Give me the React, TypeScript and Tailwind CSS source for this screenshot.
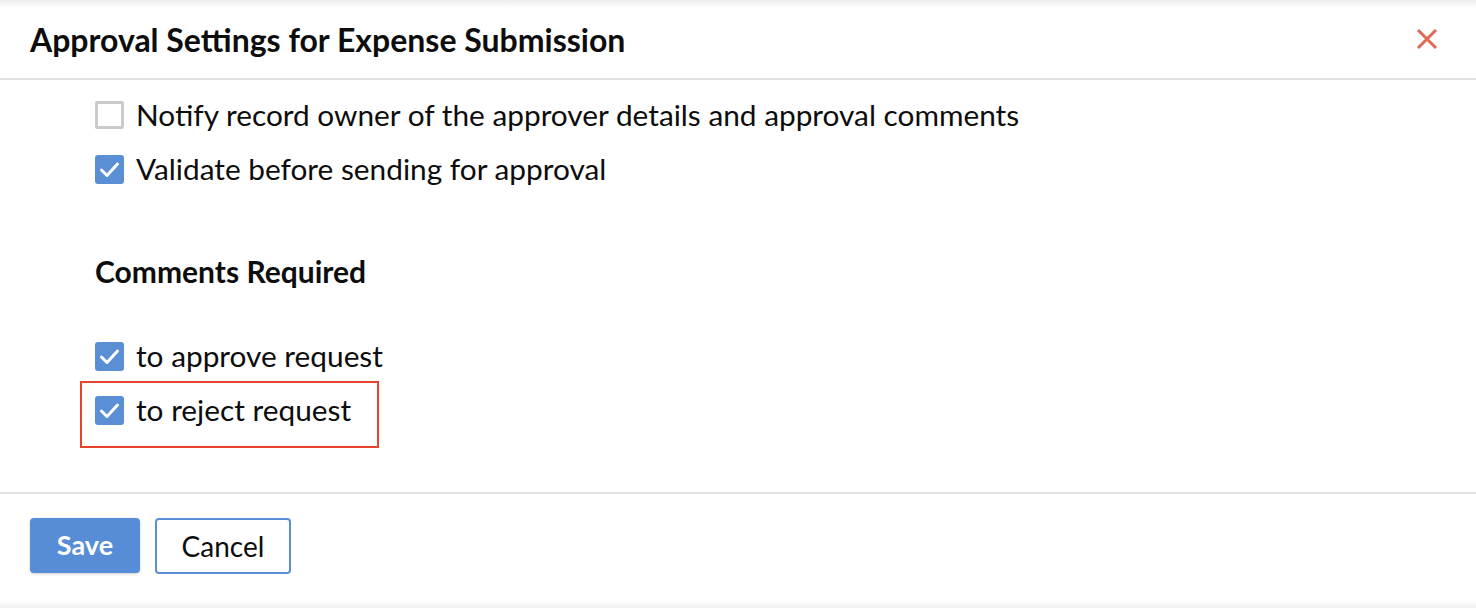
import React from "react";

function Box({ checked }: { checked: boolean }) {
  if (!checked) {
    return (
      <span className="w-[29px] h-[28px] shrink-0 border-[3px] border-[#cbcbcb] bg-white rounded-[2px]" />
    );
  }
  return (
    <span className="w-[29px] h-[29px] shrink-0 rounded-[3px] bg-[#5b8fd5] flex items-center justify-center">
      <svg width="21" height="17" viewBox="0 0 21 17" fill="none">
        <path d="M2.5 9l5.5 5.5L18.5 3" stroke="white" strokeWidth="3" strokeLinecap="round" strokeLinejoin="round" />
      </svg>
    </span>
  );
}

function Row({ checked, label }: { checked: boolean; label: string }) {
  return (
    <div className="flex items-center h-[54px] gap-[12px]">
      <Box checked={checked} />
      <span className="text-[29.8px] leading-none text-[#0d0d0d]">{label}</span>
    </div>
  );
}

export default function App() {
  return (
    <div className="w-[1476px] h-[608px] bg-white flex flex-col font-['Lato',sans-serif] text-[#0d0d0d] overflow-hidden">
      <div className="h-[8px] shrink-0 bg-gradient-to-b from-[#ececec] to-white" />
      <header className="h-[72px] shrink-0 flex items-center justify-between pl-[30px] pr-[38px] border-b-2 border-[#e2e2e2]">
        <h1 className="text-[32px] font-bold pb-[6px]">Approval Settings for Expense Submission</h1>
        <button className="text-[#e06a58] pb-[8px]">
          <svg width="22" height="20" viewBox="0 0 22 20">
            <path d="M2 1l18 18M20 1L2 19" stroke="currentColor" strokeWidth="3" />
          </svg>
        </button>
      </header>
      <section className="flex-1 flex flex-col pt-[8px]">
        <div className="pl-[95px]">
          <Row checked={false} label="Notify record owner of the approver details and approval comments" />
          <Row checked label="Validate before sending for approval" />
          <h2 className="mt-[57px] h-[36px] flex items-center text-[30px] font-bold">Comments Required</h2>
          <div className="mt-[40px]">
            <Row checked label="to approve request" />
          </div>
        </div>
        <div className="ml-[80px] mt-[-2px] w-[299px] h-[67px] border-2 border-[#e8432c] pl-[13px]">
          <div className="flex items-center h-[54px] gap-[12px]">
            <Box checked />
            <span className="text-[29.8px] leading-none">to reject request</span>
          </div>
        </div>
      </section>
      <footer className="h-[116px] shrink-0 border-t-2 border-[#e2e2e2] flex flex-col">
        <div className="flex gap-[15px] pl-[30px] pt-[24px]">
          <button className="w-[110px] h-[55px] rounded-[4px] bg-[#578dd6] text-white text-[27px] font-bold shadow-[0_1px_3px_rgba(0,0,0,0.2)]">
            Save
          </button>
          <button className="w-[136px] h-[56px] rounded-[4px] border-2 border-[#5a8ed6] bg-white text-[28px] text-[#0d0d0d]">
            Cancel
          </button>
        </div>
        <div className="mt-auto h-[8px] bg-gradient-to-b from-white to-[#f0f0f0]" />
      </footer>
    </div>
  );
}
